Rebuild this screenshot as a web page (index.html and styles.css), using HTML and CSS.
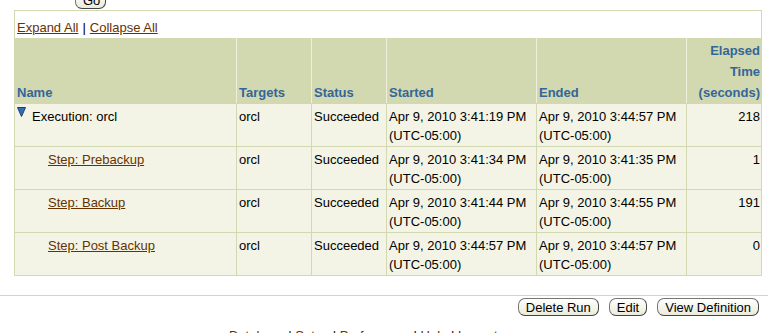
FILE: index.html
```html
<!DOCTYPE html>
<html lang="en">
<head>
    <meta charset="UTF-8">
    <title>Execution Results</title>
    <link rel="stylesheet" href="styles.css">
</head>
<body>
    <div class="go-row">
        <button class="btn">Go</button>
    </div>

    <div class="results">
        <div class="expand">
            <a href="#">Expand All</a> | <a href="#">Collapse All</a>
        </div>
        <table class="steps">
            <thead>
                <tr>
                    <th class="c-name">Name</th>
                    <th class="c-target">Targets</th>
                    <th class="c-status">Status</th>
                    <th class="c-date">Started</th>
                    <th class="c-date">Ended</th>
                    <th class="c-num">Elapsed<br>Time<br>(seconds)</th>
                </tr>
            </thead>
            <tbody>
                <tr>
                    <td><span class="toggle"><svg width="9" height="10" viewBox="0 0 9 10"><path d="M0.5 0.5H8.5L4.5 9.5Z" fill="#3a6db0" stroke="#1d3f6e" stroke-width="1"/></svg></span>Execution: orcl</td>
                    <td>orcl</td>
                    <td>Succeeded</td>
                    <td>Apr 9, 2010 3:41:19 PM<br>(UTC-05:00)</td>
                    <td>Apr 9, 2010 3:44:57 PM<br>(UTC-05:00)</td>
                    <td class="num">218</td>
                </tr>
                <tr>
                    <td class="step"><a href="#">Step: Prebackup</a></td>
                    <td>orcl</td>
                    <td>Succeeded</td>
                    <td>Apr 9, 2010 3:41:34 PM<br>(UTC-05:00)</td>
                    <td>Apr 9, 2010 3:41:35 PM<br>(UTC-05:00)</td>
                    <td class="num">1</td>
                </tr>
                <tr>
                    <td class="step"><a href="#">Step: Backup</a></td>
                    <td>orcl</td>
                    <td>Succeeded</td>
                    <td>Apr 9, 2010 3:41:44 PM<br>(UTC-05:00)</td>
                    <td>Apr 9, 2010 3:44:55 PM<br>(UTC-05:00)</td>
                    <td class="num">191</td>
                </tr>
                <tr>
                    <td class="step"><a href="#">Step: Post Backup</a></td>
                    <td>orcl</td>
                    <td>Succeeded</td>
                    <td>Apr 9, 2010 3:44:57 PM<br>(UTC-05:00)</td>
                    <td>Apr 9, 2010 3:44:57 PM<br>(UTC-05:00)</td>
                    <td class="num">0</td>
                </tr>
            </tbody>
        </table>
    </div>

    <div class="actions">
        <button class="btn">Delete Run</button>
        <button class="btn">Edit</button>
        <button class="btn">View Definition</button>
    </div>

    <div class="footer-links">
        <a href="#">Database</a> | <a href="#">Setup</a> | <a href="#">Preferences</a> | <a href="#">Help</a> | <a href="#">Logout</a>
    </div>
</body>
</html>
```

FILE: styles.css
```css
body {
    font-family: "Liberation Sans", Arial, sans-serif;
    font-size: 13px;
    margin: 0;
    padding: 0;
    background-color: #fff;
    color: #000;
}
a {
    color: #663300;
}
.go-row {
    height: 10px;
    padding-left: 75px;
    display: flex;
    align-items: flex-end;
}
.btn {
    font-family: "Liberation Sans", Arial, sans-serif;
    font-size: 13px;
    color: #000;
    background: linear-gradient(#ffffff, #ebebdc);
    border: 1px solid #777;
    border-right-color: #444;
    border-bottom-color: #444;
    border-radius: 7px;
    height: 18px;
    padding: 0 7px;
    line-height: 15px;
}
.go-row .btn {
    width: 31px;
    height: 18px;
    margin-bottom: 1px;
}
.results {
    margin-left: 14px;
    width: 748px;
    border: 1px solid #d2d8b0;
    box-sizing: border-box;
}
.expand {
    height: 27px;
    padding-left: 2px;
    line-height: 20px;
    display: flex;
    align-items: flex-end;
    gap: 4px;
}
.steps {
    width: 746px;
    table-layout: fixed;
    border-collapse: separate;
    border-spacing: 0;
}
.steps th {
    background-color: #d2d8b0;
    color: #336699;
    font-weight: bold;
    text-align: left;
    vertical-align: bottom;
    line-height: 21px;
    height: 65px;
    padding: 0 1px 0 2px;
    box-sizing: border-box;
    border-left: 1px solid #eef0dc;
}
.steps td {
    background-color: #f3f4e5;
    vertical-align: top;
    line-height: 19px;
    height: 43px;
    padding: 3px 1px 0 2px;
    box-sizing: border-box;
    border-top: 1px solid #d2d8b0;
    border-left: 1px solid #d2d8b0;
    white-space: nowrap;
}
.steps th:first-child, .steps td:first-child {
    border-left: none;
}
.c-name { width: 221px; }
.c-target { width: 75px; }
.c-status { width: 75px; }
.c-date { width: 150px; }
.steps th.c-num {
    width: 75px;
    text-align: right;
}
.steps td.num {
    text-align: right;
}
.toggle {
    display: inline-block;
    width: 15px;
    vertical-align: top;
    line-height: 10px;
}
.steps td.step {
    padding-left: 33px;
}
.actions {
    margin-top: 19px;
    border-top: 1px solid #d2d8b0;
    padding: 2px 9px 0 0;
    display: flex;
    justify-content: flex-end;
    gap: 10px;
}
.footer-links {
    margin-top: 12px;
    padding-left: 229px;
}
```
